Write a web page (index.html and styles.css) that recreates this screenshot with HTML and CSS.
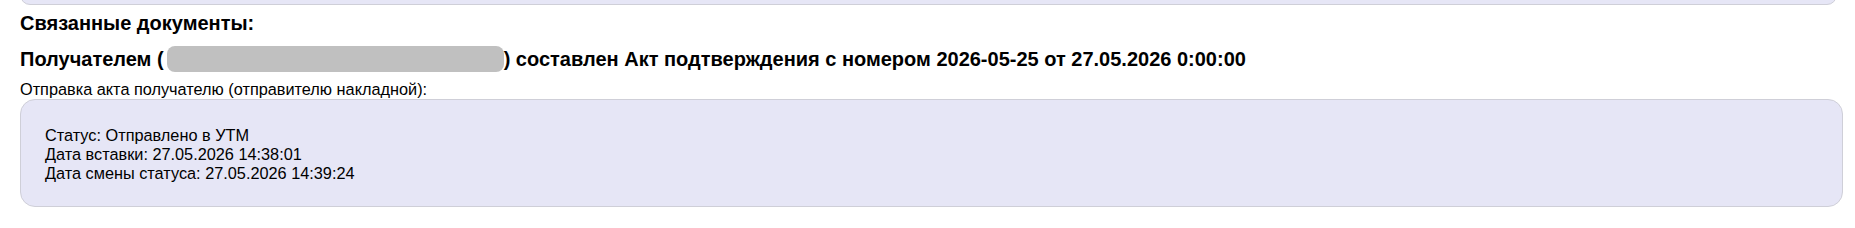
FILE: index.html
```html
<!DOCTYPE html>
<html lang="ru">
<head>
    <meta charset="UTF-8">
    <title>Связанные документы</title>
    <link rel="stylesheet" href="styles.css">
</head>
<body>
    <div class="prev-panel"></div>
    <div class="related">
        <div class="related-title">Связанные документы:</div>
        <div class="doc-line">
            <span>Получателем (</span>
            <span class="hidden-name"></span>
            <span>) составлен Акт подтверждения с номером 2026-05-25 от 27.05.2026 0:00:00</span>
        </div>
        <div class="send-caption">Отправка акта получателю (отправителю накладной):</div>
        <div class="status-box">
            <div>Статус: Отправлено в УТМ</div>
            <div>Дата вставки: 27.05.2026 14:38:01</div>
            <div>Дата смены статуса: 27.05.2026 14:39:24</div>
        </div>
    </div>
</body>
</html>
```

FILE: styles.css
```css
body {
    margin: 0;
    background-color: #fff;
    color: #000;
    font-family: "Liberation Sans", Arial, sans-serif;
    font-size: 16.3px;
}

.prev-panel {
    height: 20px;
    margin: -17px 18px 0 20px;
    background-color: #e6e6f6;
    border: 1px solid #cfcfd8;
    border-radius: 10px;
}

.related {
    padding: 0 12px 0 20px;
}

.related-title {
    font-size: 20px;
    font-weight: bold;
    margin-top: 7px;
}

.doc-line {
    display: flex;
    align-items: center;
    font-size: 20px;
    font-weight: bold;
    margin-top: 11px;
    white-space: pre;
}

.hidden-name {
    display: inline-block;
    width: 337px;
    height: 26px;
    margin-left: 3px;
    background-color: #c0c0c0;
    border-radius: 8px;
}

.send-caption {
    margin-top: 8px;
}

.status-box {
    padding: 26px 24px 23px;
    background-color: #e6e6f6;
    border: 1px solid #cfcfd8;
    border-radius: 15px;
}
```
